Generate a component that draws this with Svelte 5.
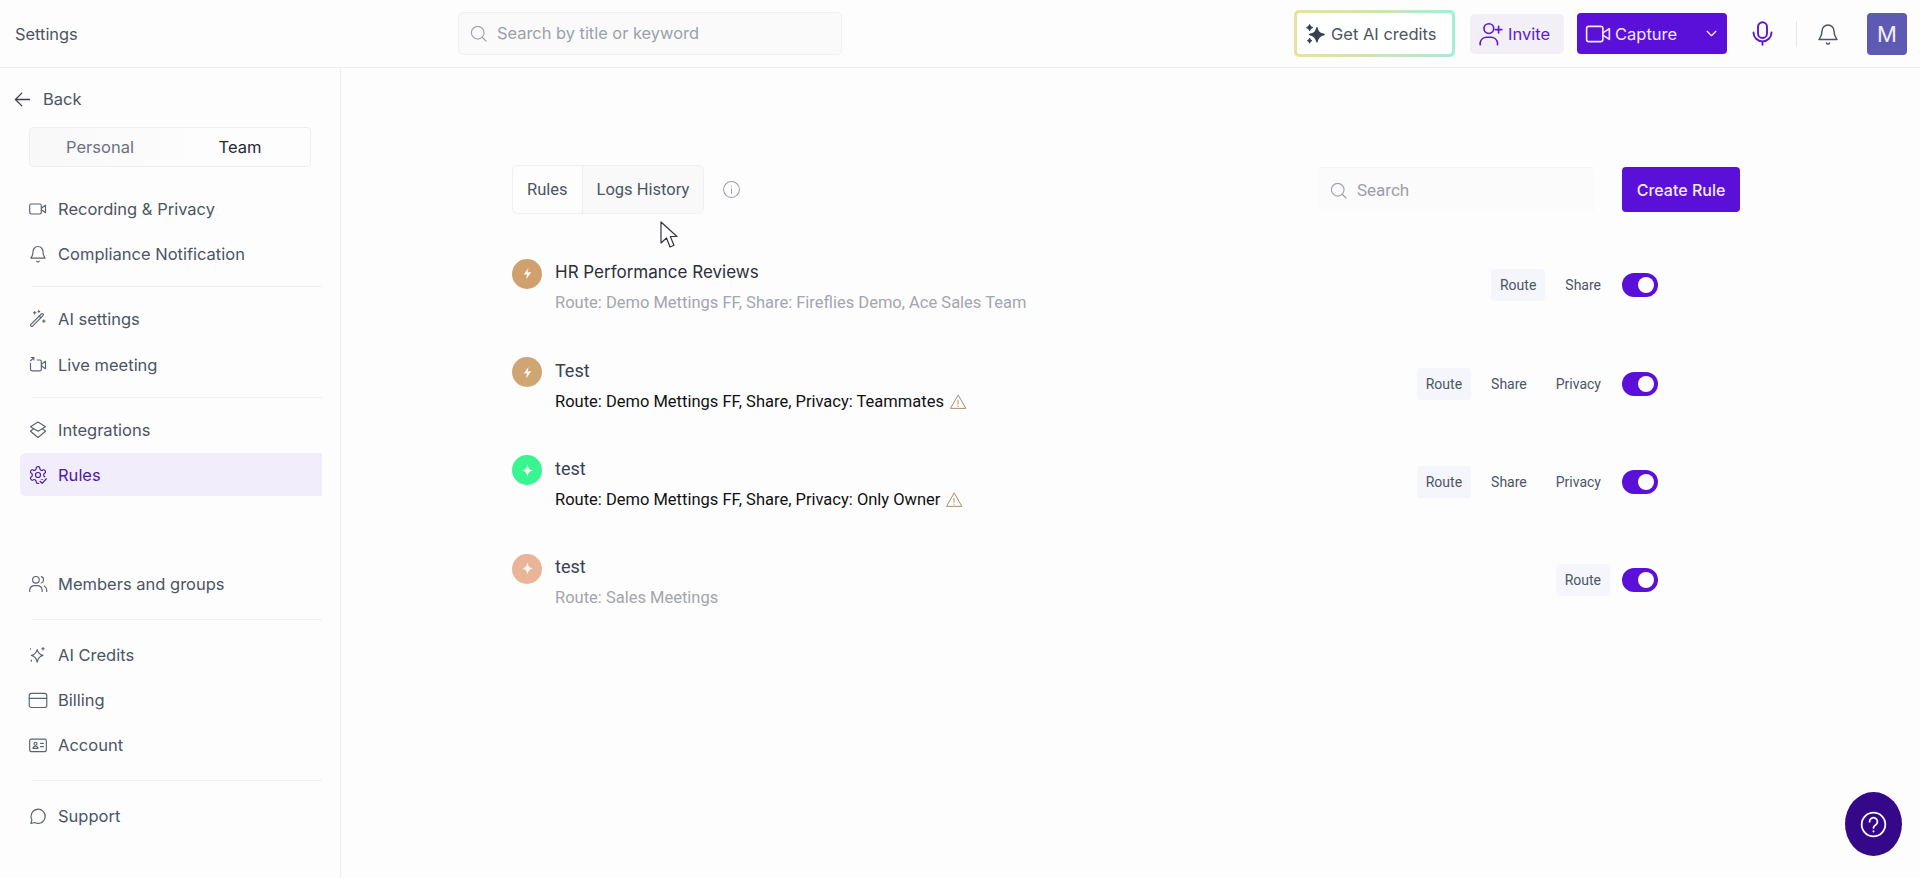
<script>
  const icons = {
    video: '<rect x="2" y="6" width="14" height="12" rx="2"/><path d="M16 11l5-3.500v9L16 13"/>',
    bell: '<path d="M6 9a6 6 0 0 1 12 0c0 5 2 7 2.500 8h-17C4 16 6 14 6 9z"/><path d="M10.500 20.500a1.600 1.600 0 0 0 3 0"/>',
    wand: '<path d="M3.500 18.500 16 6a1.400 1.400 0 0 1 2 2L5.500 20.500a1.400 1.400 0 0 1-2-2z"/><path d="M13.500 8.500l2 2M8 3v3M6.500 4.500h3M19 13v3M17.500 14.500h3M13 2v2M12 3h2"/>',
    live: '<path d="M3 10v7a2 2 0 0 0 2 2h9a2 2 0 0 0 2-2V8a2 2 0 0 0-2-2h-3"/><path d="M16 11l5-3.500v9L16 13M3 7l4-4M4 3h3v3"/>',
    layers: '<path d="M12 2.500 21 8l-9 5.500L3 8z"/><path d="M6.500 10.500 3 13.500 12 21l9-7.500-3.500-3"/>',
    rules: '<path d="M12.220 2h-.44a2 2 0 0 0-2 2v.18a2 2 0 0 1-1 1.730l-.43.25a2 2 0 0 1-2 0l-.15-.08a2 2 0 0 0-2.730.73l-.22.38a2 2 0 0 0 .73 2.730l.15.1a2 2 0 0 1 1 1.720v.51a2 2 0 0 1-1 1.740l-.15.09a2 2 0 0 0-.73 2.730l.22.38a2 2 0 0 0 2.730.73l.15-.08a2 2 0 0 1 2 0l.43.25a2 2 0 0 1 1 1.730V20a2 2 0 0 0 2 2h.44a2 2 0 0 0 2-2v-.18a2 2 0 0 1 1-1.730l.43-.25a2 2 0 0 1 2 0l.15.08a2 2 0 0 0 2.730-.73l.22-.39a2 2 0 0 0-.73-2.730l-.15-.08a2 2 0 0 1-1-1.740v-.5a2 2 0 0 1 1-1.740l.15-.09a2 2 0 0 0 .73-2.730l-.22-.38a2 2 0 0 0-2.730-.73l-.15.08a2 2 0 0 1-2 0l-.43-.25a2 2 0 0 1-1-1.730V4a2 2 0 0 0-2-2z"/><circle cx="12" cy="12" r="3"/><path d="M14.500 19.500l2.500 2.500 5-5.500" stroke="#f1edfb" stroke-width="5"/><path d="M14.500 19.500l2.500 2.500 5-5.500"/>',
    users: '<circle cx="9.500" cy="7" r="4"/><path d="M2 21v-2a6 6 0 0 1 6-5h3a6 6 0 0 1 6 5v2M16 3.200a4 4 0 0 1 0 7.600M19.500 14.500a6 6 0 0 1 3 5v1.500"/>',
    spark: '<path d="M11 5.500c1 4 3 6 7 7-4 1-6 3-7 8-1-5-3-7-7-8 4-1 6-3 7-7z"/><path d="M18 3v3M16.500 4.500h3M4 18v1.500M3 4.500v.500"/>',
    card: '<rect x="1.500" y="4" width="21" height="17" rx="2.500"/><path d="M1.500 10h21"/>',
    id: '<rect x="2" y="5" width="20" height="15" rx="2"/><circle cx="9" cy="10.500" r="1.800"/><path d="M6 16c0-2 1.500-2.500 3-2.500s3 .5 3 2.500zM15 10h3.500M15 14h3.500"/>',
    chat: '<path d="M3.500 21l1.200-4.500A8.500 8.500 0 1 1 8 19.800z"/>'
  };

  const groups = [
    [{ label: 'Recording & Privacy', icon: 'video' }, { label: 'Compliance Notification', icon: 'bell' }],
    [{ label: 'AI settings', icon: 'wand' }, { label: 'Live meeting', icon: 'live' }],
    [{ label: 'Integrations', icon: 'layers' }, { label: 'Rules', icon: 'rules', active: true }, { spacer: true }, { label: 'Members and groups', icon: 'users' }],
    [{ label: 'AI Credits', icon: 'spark' }, { label: 'Billing', icon: 'card' }, { label: 'Account', icon: 'id' }],
    [{ label: 'Support', icon: 'chat' }]
  ];

  const bolt = 'M13.500 3 6 13.500h5L10 21l8-11h-5.500z';
  const star = 'M12 2c1 6 3 9 9 10-6 1-8 4-9 10-1-6-3-9-9-10 6-1 8-4 9-10z';

  const rules = [
    { title: 'HR Performance Reviews', sub: 'Route: Demo Mettings FF, Share: Fireflies Demo, Ace Sales Team', color: '#d0a16e', mark: bolt, tags: ['Route', 'Share'], muted: true, poppins: true },
    { title: 'Test', sub: 'Route: Demo Mettings FF, Share, Privacy: Teammates', color: '#d0a574', mark: bolt, tags: ['Route', 'Share', 'Privacy'], warn: true },
    { title: 'test', sub: 'Route: Demo Mettings FF, Share, Privacy: Only Owner', color: '#37f58f', mark: star, tags: ['Route', 'Share', 'Privacy'], warn: true },
    { title: 'test', sub: 'Route: Sales Meetings', color: '#e9b497', mark: star, tags: ['Route'], muted: true }
  ];
</script>

<div class="page">
  <header class="top">
    <div class="brand">Settings</div>
    <div class="global-search">
      <svg class="i18" viewBox="0 0 24 24"><circle cx="11" cy="11" r="8"/><path d="M17 17l4.500 4.500"/></svg>
      <span>Search by title or keyword</span>
    </div>
    <div class="actions">
      <button class="credits">
        <span class="credits-in">
          <svg class="i20 dark" viewBox="0 0 24 24"><path d="M13 5c1 5 3 6.500 8 7.500-5 1-7 3-8 8-1-5-3-7-8-8 5-1 7-2.500 8-7.500z"/><path d="M5 2c.5 2 1 2.500 3 3-2 .5-2.500 1-3 3-.5-2-1-2.500-3-3 2-.5 2.500-1 3-3zM5 17c.3 1.500.7 1.900 2 2.200-1.300.3-1.700.7-2 2.300-.3-1.600-.7-2-2-2.300 1.300-.3 1.700-.7 2-2.200z"/></svg>
          Get AI credits
        </span>
      </button>
      <button class="invite">
        <svg class="i24" viewBox="0 0 24 24"><circle cx="10" cy="7" r="4.500"/><path d="M2 22v-2a6 6 0 0 1 6-5h4a6 6 0 0 1 6 5v2M19 5v6M16 8h6"/></svg>
        Invite
      </button>
      <button class="capture">
        <svg class="i24" viewBox="0 0 24 24"><rect x="1.500" y="5" width="15" height="14" rx="2"/><path d="M16.500 11l6-4v10l-6-4"/></svg>
        <span class="capture-label">Capture</span>
        <svg class="i16" viewBox="0 0 24 24"><path d="M5 8.500l7 7 7-7"/></svg>
      </button>
      <svg class="mic" viewBox="0 0 24 24"><rect x="8" y="2" width="8" height="14" rx="4"/><path d="M4 11a8 8 0 0 0 16 0M12 19v3"/></svg>
      <span class="vr"></span>
      <svg class="hbell" viewBox="0 0 24 24"><path d="M6 9a6 6 0 0 1 12 0c0 5 2 7 3 8.500H3C4 16 6 14 6 9z"/><path d="M10.500 21a1.600 1.600 0 0 0 3 0"/></svg>
      <div class="avatar">M</div>
    </div>
  </header>

  <div class="body">
    <aside class="side">
      <div class="back">
        <svg class="back-i" viewBox="0 0 24 24"><path d="M22 12H2M11 3l-9 9 9 9"/></svg>
        Back
      </div>
      <div class="seg">
        <span class="seg-off">Personal</span>
        <span class="seg-on">Team</span>
      </div>
      <nav class="nav">
        {#each groups as group, g}
          {#if g > 0}<div class="rule" class:wide={g > 2}></div>{/if}
          {#each group as item}
            {#if item.spacer}
              <div class="spacer"></div>
            {:else}
              <div class="item" class:active={item.active}>
                <svg class="nav-i" viewBox="0 0 24 24">{@html icons[item.icon]}</svg>
                {item.label}
              </div>
            {/if}
          {/each}
        {/each}
      </nav>
    </aside>

    <main class="main">
      <div class="toolbar">
        <div class="tabs">
          <span class="tab">Rules</span>
          <span class="tab tab-on">Logs History</span>
        </div>
        <svg class="info" viewBox="0 0 24 24"><circle cx="12" cy="12" r="10"/><path d="M12 11v6M12 7.500v.500"/></svg>
        <div class="grow"></div>
        <div class="search">
          <svg class="i18" viewBox="0 0 24 24"><circle cx="11" cy="11" r="8"/><path d="M17 17l4.500 4.500"/></svg>
          <span>Search</span>
        </div>
        <button class="create">Create Rule</button>
      </div>

      <div class="rows">
        {#each rules as rule}
          <div class="row">
            <span class="dot" style="background:{rule.color}">
              <svg viewBox="0 0 24 24"><path d={rule.mark}/></svg>
            </span>
            <div class="text">
              <div class="title" class:poppins={rule.poppins}>{rule.title}</div>
              <div class="sub" class:muted={rule.muted}>
                {rule.sub}
                {#if rule.warn}
                  <svg class="warn" viewBox="0 0 24 24"><path d="M12 3 2 20.500h20z"/><path d="M12 10v5M12 17.500v.500"/></svg>
                {/if}
              </div>
            </div>
            <div class="tags">
              {#each rule.tags as tag, t}
                <span class="tag" class:first={t === 0}>{tag}</span>
              {/each}
            </div>
            <span class="toggle"><span class="knob"></span></span>
          </div>
        {/each}
      </div>
    </main>
  </div>

  <svg class="cursor" viewBox="0 0 18 29"><path d="M1 1v21l5.500-5 3.500 9 4-1.800-3.700-8.700H17z"/></svg>
  <button class="help" aria-label="Help">
    <svg viewBox="0 0 24 24"><circle cx="12" cy="12" r="10.500"/><path d="M8.500 9.500a3.500 3.500 0 1 1 5.300 3c-1.200.8-1.800 1.400-1.800 2.500M12 17.800v.500"/></svg>
  </button>
</div>

<style>
  :global(body) {
    margin: 0;
    background: #fdfdfd;
  }
  svg {
    fill: none;
    stroke: currentColor;
    stroke-linecap: round;
    stroke-linejoin: round;
    flex: none;
  }
  button {
    font: inherit;
    border: 0;
    padding: 0;
  }
  .page {
    position: relative;
    width: 1920px;
    height: 878px;
    overflow: hidden;
    background: #fdfdfd;
    font-family: Inter, "Liberation Sans", sans-serif;
    color: #4b5563;
  }
  .top {
    height: 68px;
    box-sizing: border-box;
    border-bottom: 1px solid #eeeeef;
    display: flex;
    align-items: center;
  }
  .brand {
    width: 458px;
    padding-left: 15px;
    box-sizing: border-box;
    font-size: 16.400px;
    color: #4b5563;
  }
  .global-search {
    width: 384px;
    height: 43px;
    box-sizing: border-box;
    border: 1px solid #f0f0f2;
    border-radius: 5px;
    background: #fafafb;
    display: flex;
    align-items: center;
    gap: 9px;
    padding-left: 10px;
    color: #9ca0a8;
    font-size: 16.400px;
    margin-top: -1px;
  }
  .i18 {
    width: 19px;
    height: 19px;
    stroke-width: 1.500;
    color: #a1a5ab;
  }
  .actions {
    margin-left: 452px;
    display: flex;
    align-items: center;
  }
  .credits {
    width: 161px;
    height: 47px;
    box-sizing: border-box;
    padding: 3px;
    border-radius: 5px;
    background: linear-gradient(90deg, #e6e2a0, #cfe5b0 50%, #a6ecd6);
  }
  .credits-in {
    height: 100%;
    background: #fff;
    border-radius: 3px;
    display: flex;
    align-items: center;
    gap: 4px;
    padding-left: 8px;
    font-size: 16.500px;
    color: #4b5563;
  }
  .i20 {
    width: 22px;
    height: 22px;
    stroke-width: 1.500;
  }
  .dark {
    color: #374151;
    fill: #374151;
  }
  .invite {
    margin-left: 15px;
    width: 94px;
    height: 40px;
    border-radius: 5px;
    background: #f2eff9;
    color: #5a1ad0;
    display: flex;
    align-items: center;
    padding-left: 8px;
    box-sizing: border-box;
    gap: 4px;
    font-size: 16.500px;
  }
  .i24 {
    width: 26px;
    height: 26px;
    stroke-width: 1.500;
  }
  .capture {
    margin-left: 13px;
    width: 150px;
    height: 41px;
    border-radius: 4px;
    background: #5a10d8;
    color: #f0e8ff;
    display: flex;
    align-items: center;
    padding-left: 8px;
    box-sizing: border-box;
    font-size: 16.500px;
  }
  .capture-label {
    margin-left: 4px;
    flex: 1;
    text-align: left;
  }
  .i16 {
    width: 15px;
    height: 15px;
    stroke-width: 2;
    margin-right: 8px;
  }
  .mic {
    width: 27px;
    height: 27px;
    stroke-width: 1.700;
    color: #5a1ad0;
    margin-left: 22px;
  }
  .vr {
    width: 1px;
    height: 26px;
    background: #e8e8ea;
    margin-left: 20px;
  }
  .hbell {
    width: 24px;
    height: 24px;
    stroke-width: 1.500;
    color: #4b5563;
    margin-left: 19px;
  }
  .avatar {
    width: 40px;
    height: 42px;
    margin-left: 27px;
    border-radius: 4px;
    background: #5e5ab4;
    color: #f1f1fb;
    display: flex;
    align-items: center;
    justify-content: center;
    font-size: 22px;
  }
  .body {
    display: flex;
    height: 810px;
  }
  .side {
    width: 341px;
    box-sizing: border-box;
    border-right: 1px solid #efeff0;
  }
  .back {
    height: 32px;
    margin-top: 15px;
    display: flex;
    align-items: center;
    gap: 12px;
    padding-left: 14px;
    font-size: 16.500px;
  }
  .back-i {
    width: 17px;
    height: 17px;
    stroke-width: 1.800;
    color: #374151;
  }
  .seg {
    margin: 12px 0 0 29px;
    width: 282px;
    height: 40px;
    box-sizing: border-box;
    border: 1px solid #efeff1;
    border-radius: 4px;
    display: grid;
    grid-template-columns: 1fr 1fr;
    align-items: center;
    text-align: center;
    font-size: 16.500px;
    background: linear-gradient(90deg, #f8f8f9, #fdfdfd 60%);
  }
  .seg-off {
    color: #6b7280;
  }
  .seg-on {
    color: #1f2937;
  }
  .nav {
    margin-top: 19px;
  }
  .item {
    height: 45.300px;
    margin: 0 18px 0 20px;
    padding-left: 8px;
    display: flex;
    align-items: center;
    gap: 10px;
    font-size: 16.500px;
    color: #4b5563;
    border-radius: 6px 0 0 6px;
  }
  .active {
    height: 42.300px;
    margin-top: 1px;
    margin-bottom: 2px;
    background: #f1edfb;
    color: #4c1aa8;
  }
  .nav-i {
    width: 20px;
    height: 20px;
    stroke-width: 1.400;
    color: #5b6470;
  }
  .active .nav-i {
    color: #4c1aa8;
  }
  .rule {
    height: 1px;
    margin: 9.500px 18px 9.500px 32px;
    background: #f0f0f1;
  }
  .wide {
    margin-top: 12px;
    margin-bottom: 12px;
  }
  .spacer {
    height: 64px;
  }
  .main {
    flex: 1;
    box-sizing: border-box;
    padding: 97px 180px 0 171px;
  }
  .toolbar {
    display: flex;
    align-items: center;
    height: 49px;
  }
  .tabs {
    display: flex;
    height: 49px;
    box-sizing: border-box;
    border: 1px solid #f0f0f1;
    border-radius: 5px;
    font-family: Roboto, sans-serif;
    font-size: 16.500px;
    color: #4b5563;
    overflow: hidden;
  }
  .tab {
    display: flex;
    align-items: center;
    padding: 0 14px;
  }
  .tab-on {
    background: #f9f9fa;
    border-left: 1px solid #f0f0f1;
  }
  .info {
    width: 19px;
    height: 19px;
    stroke-width: 1.300;
    color: #9a9ea4;
    margin-left: 18px;
  }
  .grow {
    flex: 1;
  }
  .search {
    width: 277px;
    height: 45px;
    box-sizing: border-box;
    border-radius: 4px;
    background: #fbfbfc;
    border-top: 1px solid #f5f5f6;
    display: flex;
    align-items: center;
    gap: 9px;
    padding-left: 11px;
    color: #9ca0a8;
    font-size: 17px;
    font-family: Roboto, sans-serif;
  }
  .create {
    width: 118px;
    height: 45px;
    margin-left: 27px;
    border-radius: 4px;
    background: #5a10d8;
    color: #f2ebff;
    font-family: Inter, sans-serif;
    font-size: 16px;
    font-weight: 500;
  }
  .rows {
    margin-top: 27px;
    padding-right: 82px;
  }
  .row {
    height: 98.400px;
    display: flex;
    align-items: center;
    box-sizing: border-box;
    padding-bottom: 10px;
  }
  .dot {
    width: 30px;
    height: 30px;
    border-radius: 50%;
    margin: -23px 13px 0 0;
    display: flex;
    align-items: center;
    justify-content: center;
    flex: none;
  }
  .dot svg {
    width: 15px;
    height: 15px;
    fill: #fdf7ef;
    stroke: none;
  }
  .text {
    flex: 1;
    padding-top: 5px;
    font-family: Roboto, sans-serif;
  }
  .title {
    font-size: 18px;
    line-height: 24px;
    color: #374151;
  }
  .poppins {
    font-family: Inter, sans-serif;
    font-size: 17px;
    color: #2b2f38;
  }
  .sub {
    margin-top: 7px;
    font-size: 16.500px;
    line-height: 24px;
    color: #111111;
    display: flex;
    align-items: center;
    gap: 5px;
  }
  .muted {
    color: #a2a6ad;
  }
  .warn {
    width: 18px;
    height: 18px;
    stroke-width: 1.300;
    color: #a98a6a;
  }
  .tags {
    display: flex;
    gap: 11px;
    font-family: Roboto, sans-serif;
    font-size: 14px;
    color: #4b5563;
    margin-right: 12px;
  }
  .tag {
    height: 32px;
    padding: 0 9px;
    display: flex;
    align-items: center;
    border-radius: 4px;
  }
  .first {
    background: #f5f6fb;
  }
  .toggle {
    width: 36px;
    height: 24px;
    border-radius: 12px;
    background: #5a10d8;
    display: flex;
    align-items: center;
    justify-content: flex-end;
    padding-right: 4px;
    box-sizing: border-box;
    flex: none;
  }
  .knob {
    width: 16px;
    height: 16px;
    border-radius: 50%;
    background: #fdfdfd;
  }
  .cursor {
    position: absolute;
    left: 660px;
    top: 221px;
    width: 18px;
    height: 29px;
    stroke: #33363c;
    stroke-width: 1.200;
    fill: #fff;
  }
  .help {
    position: absolute;
    left: 1845px;
    top: 792px;
    width: 57px;
    height: 64px;
    border-radius: 50%;
    background: #35088a;
    display: flex;
    align-items: center;
    justify-content: center;
  }
  .help svg {
    width: 27px;
    height: 27px;
    stroke: #fff;
    stroke-width: 1.600;
  }
</style>
